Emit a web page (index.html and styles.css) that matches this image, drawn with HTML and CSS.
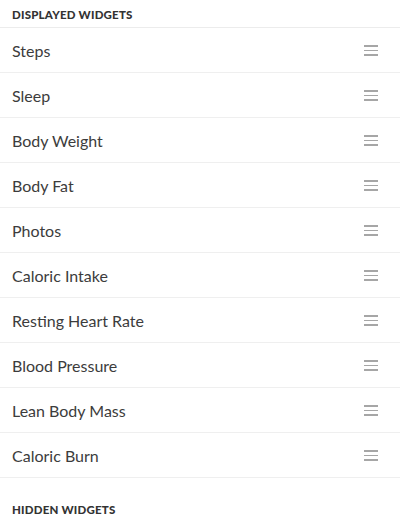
FILE: index.html
```html
<!DOCTYPE html>
<html>
<head>
<meta charset="utf-8">
<link rel="stylesheet" href="styles.css">
</head>
<body>
<div class="section-title">DISPLAYED WIDGETS</div>
<ul class="list">
  <li class="row"><span class="label">Steps</span><span class="handle"><i></i><i></i><i></i></span></li>
  <li class="row"><span class="label">Sleep</span><span class="handle"><i></i><i></i><i></i></span></li>
  <li class="row"><span class="label">Body Weight</span><span class="handle"><i></i><i></i><i></i></span></li>
  <li class="row"><span class="label">Body Fat</span><span class="handle"><i></i><i></i><i></i></span></li>
  <li class="row"><span class="label">Photos</span><span class="handle"><i></i><i></i><i></i></span></li>
  <li class="row"><span class="label">Caloric Intake</span><span class="handle"><i></i><i></i><i></i></span></li>
  <li class="row"><span class="label">Resting Heart Rate</span><span class="handle"><i></i><i></i><i></i></span></li>
  <li class="row"><span class="label">Blood Pressure</span><span class="handle"><i></i><i></i><i></i></span></li>
  <li class="row"><span class="label">Lean Body Mass</span><span class="handle"><i></i><i></i><i></i></span></li>
  <li class="row"><span class="label">Caloric Burn</span><span class="handle"><i></i><i></i><i></i></span></li>
</ul>
<div class="section-title hidden-title">HIDDEN WIDGETS</div>
</body>
</html>
```
FILE: styles.css
```css
html, body {
  margin: 0;
  padding: 0;
  background: #ffffff;
  font-family: Lato, "Open Sans", sans-serif;
  color: #3a3a3a;
}
.section-title {
  box-sizing: border-box;
  height: 28px;
  padding: 8px 12px 0;
  font-size: 11.5px;
  font-weight: 900;
  letter-spacing: 0.2px;
  color: #333333;
  border-bottom: 1px solid #ececec;
}
.hidden-title {
  border-bottom: none;
  height: auto;
  padding-top: 25px;
}
.list {
  list-style: none;
  margin: 0;
  padding: 0;
}
.row {
  box-sizing: border-box;
  height: 45px;
  display: flex;
  align-items: center;
  justify-content: space-between;
  padding: 1px 22px 0 12px;
  border-bottom: 1px solid #efefef;
}
.label {
  font-size: 16px;
  color: #3c3c3c;
}
.handle {
  display: flex;
  flex-direction: column;
  gap: 3px;
  width: 14px;
}
.handle i {
  display: block;
  height: 1.5px;
  background: #a6a6a6;
}
```
